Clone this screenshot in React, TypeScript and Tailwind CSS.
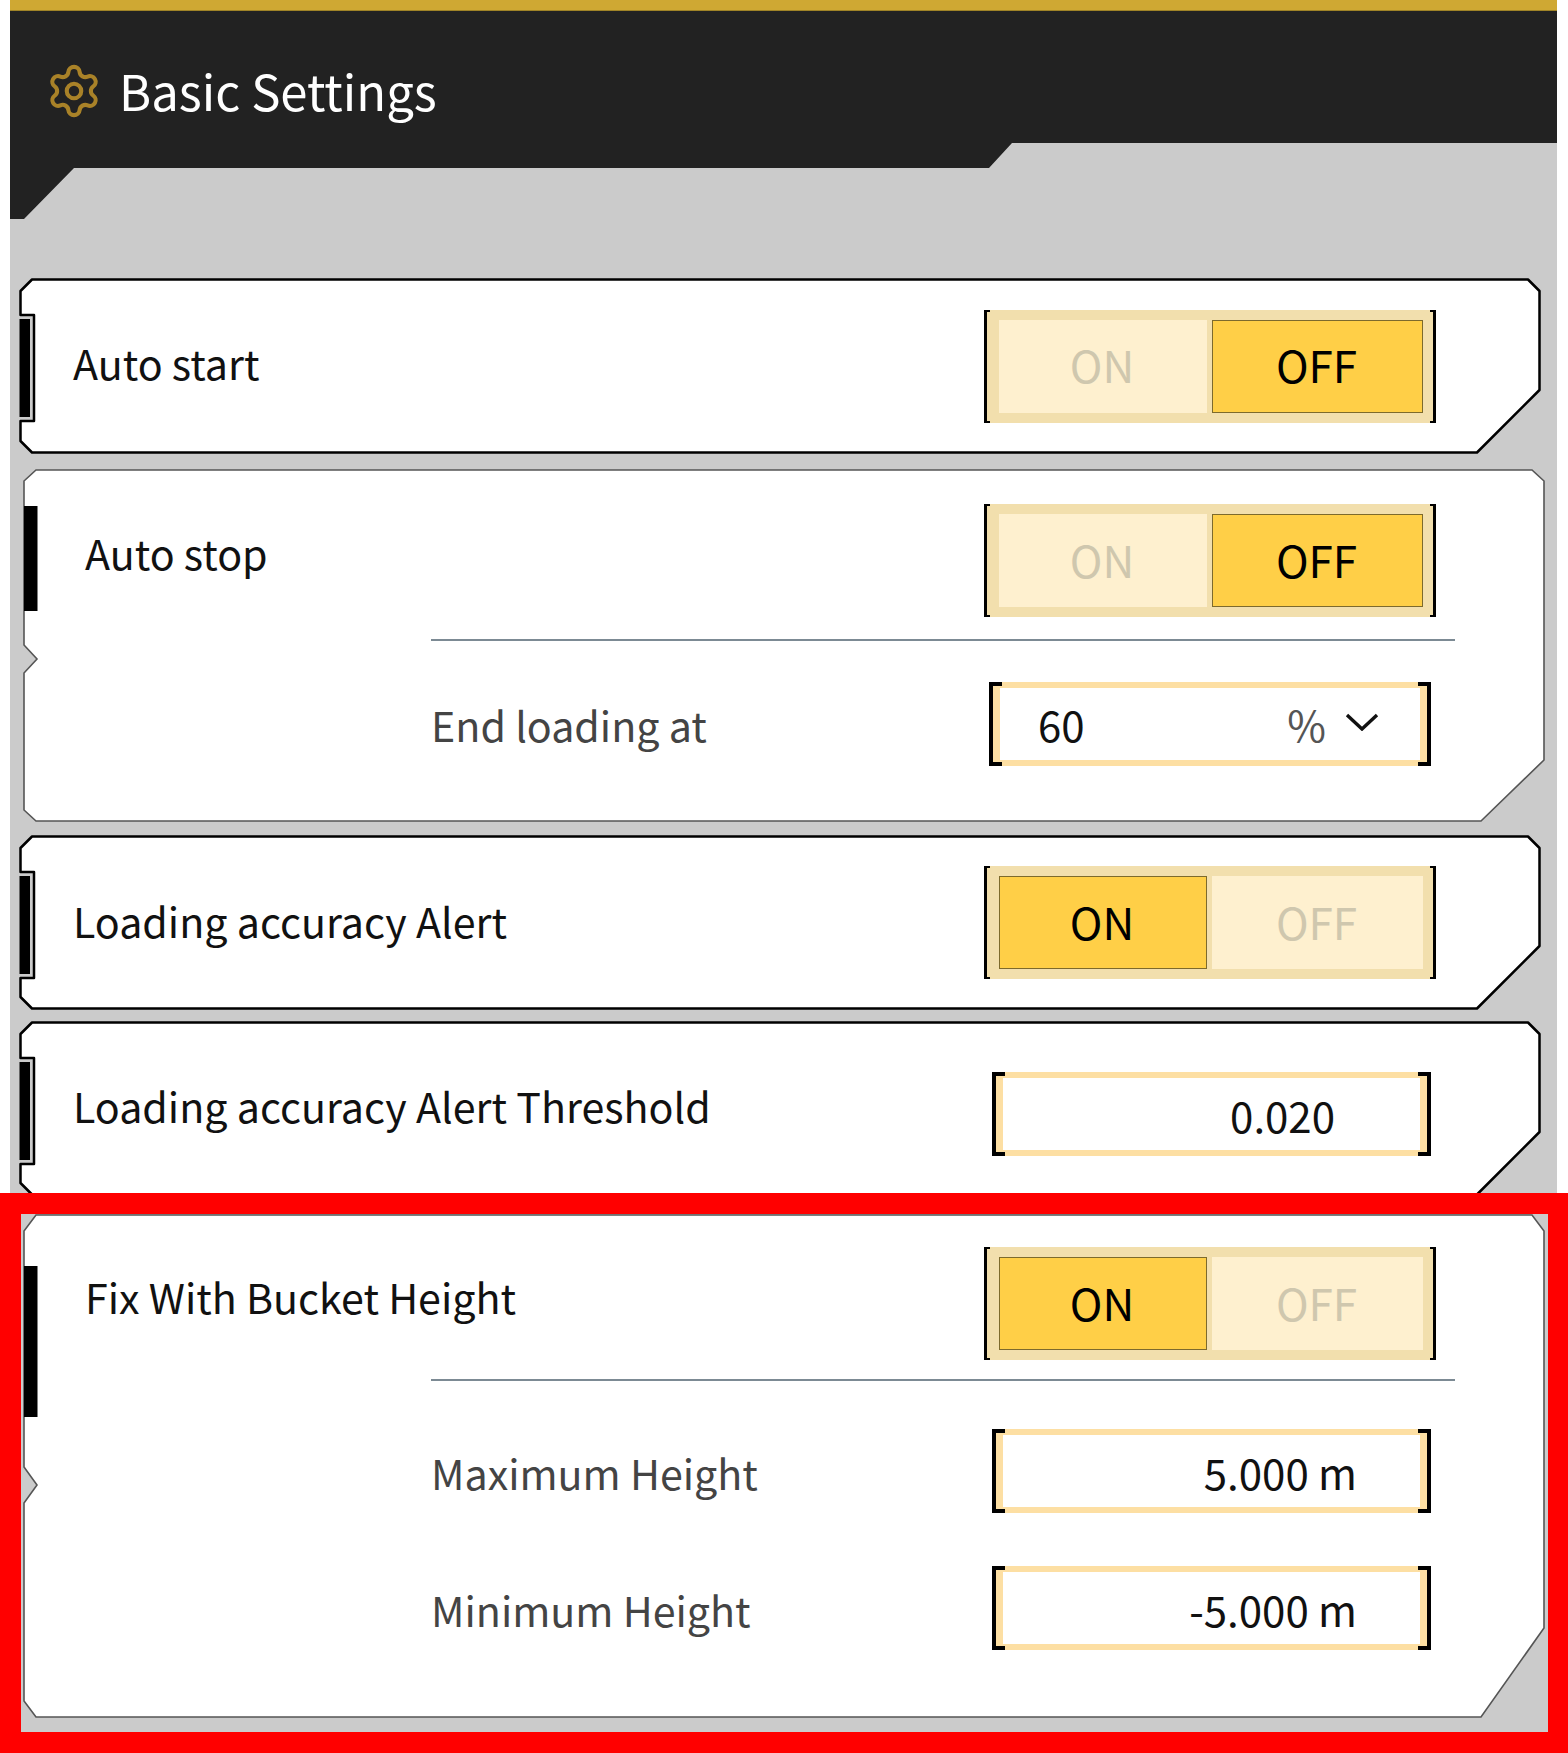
import { Settings } from "lucide-react";

const FONT = "font-['Noto_Sans_CJK_JP','Noto_Sans',sans-serif]";

// outline of the heavy one-line cards
function HeavyFrame({ w, h }: { w: number; h: number }) {
  const d = `M13 1.5 H${w - 13} L${w - 1.5} 13 V${h - 64} L${w - 64} ${h - 1.5} H13 L1.5 ${h - 13} V143 H15 V37 H1.5 V13 Z`;
  return (
    <svg className="absolute inset-0" width={w} height={h + 1} viewBox={`0 0 ${w} ${h + 1}`}>
      <path d={d} fill="#fff" stroke="#000" strokeWidth="2.5" strokeLinejoin="round" />
      <rect x="0.5" y="41" width="10.5" height="98" fill="#000" />
    </svg>
  );
}

// outline of the thin cards that hold sub rows
function ThinFrame(props: {
  w: number;
  h: number;
  cut: number;
  diag: number;
  bar: [number, number];
  notch: [number, number];
}) {
  const { w, h, cut, diag, bar, notch } = props;
  const mid = (notch[0] + notch[1]) / 2;
  const d = `M13 1 H${w - 13} L${w - 1} ${cut} V${h - diag} L${w - 64} ${h - 1} H13 L1 ${h - cut} V${notch[1]} L14 ${mid} L1 ${notch[0]} V${cut} Z`;
  return (
    <svg className="absolute inset-0" width={w} height={h} viewBox={`0 0 ${w} ${h}`}>
      <path d={d} fill="#fff" stroke="#555" strokeWidth="1.6" />
      <rect x="1" y={bar[0]} width="13.5" height={bar[1] - bar[0]} fill="#000" />
    </svg>
  );
}

function Toggle({ on }: { on: boolean }) {
  const active = "bg-[#ffcf47] border border-[#7d6a2c] text-black";
  const idle = "bg-[#fef0cf] text-[#cfc7ae]";
  return (
    <div className="relative flex h-[113px] w-[452px] shrink-0 gap-[5px] bg-[#f2dfad] py-[10px] pl-[15px] pr-[13px]">
      <span className="absolute left-0 top-0 h-full w-[6px] border-y-2 border-l-[3px] border-black" />
      <span className="absolute right-0 top-0 h-full w-[6px] border-y-2 border-r-[3px] border-black" />
      <div className={`flex w-[208px] items-center justify-center pb-[4px] pr-[2px] text-[44px] ${on ? active : idle}`}>ON</div>
      <div className={`flex flex-1 items-center justify-center pb-[4px] pr-[2px] text-[44px] ${on ? idle : active}`}>OFF</div>
    </div>
  );
}

function Field({ className, children }: { className: string; children: React.ReactNode }) {
  return (
    <div className={`relative h-[84px] shrink-0 border-x-[11px] border-y-[6px] border-[#fddfa3] bg-white text-[42px] text-[#111] ${className}`}>
      <span className="absolute -left-[11px] -top-[6px] h-[84px] w-[13px] border-y-4 border-l-4 border-black" />
      <span className="absolute -right-[11px] -top-[6px] h-[84px] w-[13px] border-y-4 border-r-4 border-black" />
      {children}
    </div>
  );
}

export default function App() {
  return (
    <div className={`relative h-[1753px] w-[1568px] overflow-hidden bg-white ${FONT}`}>
      <div className="ml-[10px] h-full w-[1547px] bg-[#cbcbcb]">
        <div className="h-[11px] border-b border-[#a08427] bg-[#cfa833]" />
        <div className="flex h-[208px] items-start gap-[16px] bg-[#222222] pl-[35px] pt-[41px] [clip-path:polygon(0_0,100%_0,100%_132px,1002px_132px,979px_157px,64px_157px,14px_208px,0_208px)]">
          <Settings size={58} strokeWidth={1.7} className="mt-[10px] text-[#a98228]" />
          <h1 className="text-[49px] leading-[76px] text-white">Basic Settings</h1>
        </div>

        {/* Auto start */}
        <div className="relative ml-[9px] mt-[59px] h-[176px] w-[1522px]">
          <HeavyFrame w={1522} h={176} />
          <div className="relative flex h-full items-center justify-between pl-[54px] pr-[105px]">
            <span className="mb-[7px] text-[41.2px] text-[#111]">Auto start</span>
            <Toggle on={false} />
          </div>
        </div>

        {/* Auto stop */}
        <div className="relative ml-[13px] mt-[15px] h-[353px] w-[1522px]">
          <ThinFrame w={1522} h={353} cut={12} diag={62} bar={[37, 142]} notch={[176, 204]} />
          <div className="relative pl-[62px] pr-[109px] pt-[35px]">
            <div className="flex items-start justify-between">
              <span className="mt-[18px] text-[41.2px] text-[#111]">Auto stop</span>
              <Toggle on={false} />
            </div>
          </div>
          <div className="relative ml-[408px] mr-[90px] mt-[22px] h-[2px] bg-[#7c8a94]" />
          <div className="relative mt-[41px] flex items-center justify-between pl-[408px] pr-[114px]">
            <span className="mt-[2px] text-[41.2px] text-[#444]">End loading at</span>
            <Field className="w-[442px]">
              <div className="flex h-full items-center pb-[2px] pl-[38px] pr-[41px]">
                <span>60</span>
                <span className="ml-auto text-[#555]">%</span>
                <svg className="-mt-[2px] ml-[19px]" width="34" height="18" viewBox="0 0 34 18">
                  <path d="M2 2 L17 16 L32 2" fill="none" stroke="#111" strokeWidth="3.4" />
                </svg>
              </div>
            </Field>
          </div>
        </div>

        {/* Loading accuracy Alert */}
        <div className="relative ml-[9px] mt-[13px] h-[175px] w-[1522px]">
          <HeavyFrame w={1522} h={175} />
          <div className="relative flex h-full items-center justify-between pl-[54px] pr-[105px]">
            <span className="mb-[4px] text-[41.2px] text-[#111]">Loading accuracy Alert</span>
            <Toggle on={true} />
          </div>
        </div>

        {/* Threshold */}
        <div className="relative ml-[9px] mt-[11px] h-[175px] w-[1522px]">
          <HeavyFrame w={1522} h={175} />
          <div className="relative flex items-start justify-between pl-[54px] pr-[110px] pt-[51px]">
            <span className="mt-[3px] text-[41.2px] text-[#111]">Loading accuracy Alert Threshold</span>
            <Field className="w-[439px]">
              <div className="flex h-full items-center justify-end pr-[85px]">0.020</div>
            </Field>
          </div>
        </div>

        {/* Fix With Bucket Height */}
        <div className="relative ml-[13px] mt-[18px] h-[504px] w-[1522px]">
          <ThinFrame w={1522} h={504} cut={17} diag={90} bar={[52, 203]} notch={[253, 289]} />
          <div className="relative flex items-start justify-between pl-[62px] pr-[109px] pt-[33px]">
            <span className="mt-[19px] text-[41.2px] text-[#111]">Fix With Bucket Height</span>
            <Toggle on={true} />
          </div>
          <div className="relative ml-[408px] mr-[90px] mt-[19px] h-[2px] bg-[#7c8a94]" />
          <div className="relative mt-[48px] flex items-center justify-between pl-[408px] pr-[114px]">
            <span className="mt-[4px] text-[41.2px] text-[#444]">Maximum Height</span>
            <Field className="w-[439px]">
              <div className="flex h-full items-center justify-end pr-[63px]">5.000 m</div>
            </Field>
          </div>
          <div className="relative mt-[53px] flex items-center justify-between pl-[408px] pr-[114px]">
            <span className="mt-[4px] text-[41.2px] text-[#444]">Minimum Height</span>
            <Field className="w-[439px]">
              <div className="flex h-full items-center justify-end pr-[63px]">-5.000 m</div>
            </Field>
          </div>
        </div>
      </div>

      {/* red highlight box over the last card */}
      <div className="absolute inset-x-0 bottom-0 top-[1193px] border-b-[21px] border-l-[21px] border-r-[20px] border-t-[21px] border-[#ff0000]" />
    </div>
  );
}
